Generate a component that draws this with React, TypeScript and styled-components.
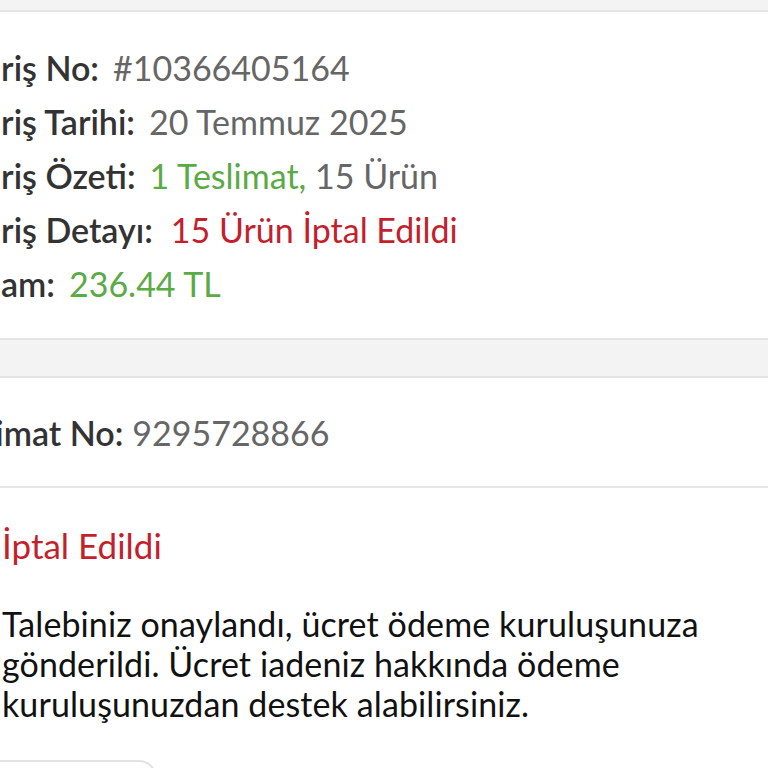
import styled, { createGlobalStyle } from "styled-components";

const GlobalStyle = createGlobalStyle`
  html, body {
    margin: 0;
    padding: 0;
    background: #ffffff;
    overflow: hidden;
  }
  body {
    font-family: Lato, "Noto Sans", sans-serif;
    -webkit-font-smoothing: antialiased;
  }
`;

const Page = styled.div`
  width: 768px;
  height: 768px;
  overflow: hidden;
  display: flex;
  flex-direction: column;
`;

const Band = styled.div<{ $height: number }>`
  height: ${(p) => p.$height}px;
  flex-shrink: 0;
  background: #f3f3f3;
  border-top: 2px solid #e4e4e4;
  border-bottom: 2px solid #e4e4e4;
  &:first-child {
    border-top: 0;
  }
`;

const Section = styled.section<{ $pad: string; $indent: number; $divider?: boolean }>`
  flex-shrink: 0;
  padding: ${(p) => p.$pad};
  margin-left: ${(p) => p.$indent}px;
  border-bottom: ${(p) => (p.$divider ? "2px solid #e6e6e6" : "0")};
`;

const Row = styled.div`
  display: flex;
  align-items: baseline;
  height: 54px;
  line-height: 54px;
  font-size: 34px;
  white-space: nowrap;
`;

const Label = styled.span<{ $gap?: number }>`
  font-weight: 600;
  color: #333333;
  margin-right: ${(p) => p.$gap ?? 14}px;
`;

const Value = styled.span<{ $tone?: "gray" | "green" | "red" }>`
  font-weight: 400;
  color: ${(p) =>
    p.$tone === "green" ? "#5aaa45" : p.$tone === "red" ? "#c41f2d" : "#666666"};
`;

const Status = styled.div`
  font-size: 35px;
  line-height: 40px;
  color: #c41f2d;
  white-space: nowrap;
`;

const Message = styled.p`
  margin: 39px 0 0;
  font-size: 34px;
  letter-spacing: 0.1px;
  line-height: 40px;
  color: #111111;
  width: 740px;
`;

const OutlineButton = styled.div`
  margin-top: 36px;
  margin-left: -20px;
  width: 175px;
  height: 48px;
  border: 2px solid #e2e2e2;
  border-radius: 18px;
  box-sizing: border-box;
`;

export default function App() {
  return (
    <Page>
      <GlobalStyle />
      <Band $height={10} />
      <Section $pad="29px 0 27px 0" $indent={-62}>
        <Row>
          <Label>Sipariş No:</Label>
          <Value>#10366405164</Value>
        </Row>
        <Row>
          <Label>Sipariş Tarihi:</Label>
          <Value>20 Temmuz 2025</Value>
        </Row>
        <Row>
          <Label>Sipariş Özeti:</Label>
          <Value $tone="green">1 Teslimat,&nbsp;</Value>
          <Value>15 Ürün</Value>
        </Row>
        <Row>
          <Label $gap={18}>Sipariş Detayı:</Label>
          <Value $tone="red">15 Ürün İptal Edildi</Value>
        </Row>
        <Row>
          <Label>Toplam:</Label>
          <Value $tone="green">236.44 TL</Value>
        </Row>
      </Section>
      <Band $height={36} />
      <Section $pad="28px 0 26px 0" $indent={-62} $divider>
        <Row>
          <Label $gap={9}>Teslimat No:</Label>
          <Value>9295728866</Value>
        </Row>
      </Section>
      <Section $pad="37px 0 0 0" $indent={2}>
        <Status>İptal Edildi</Status>
        <Message>
          Talebiniz onaylandı, ücret ödeme kuruluşunuza gönderildi. Ücret iadeniz
          hakkında ödeme kuruluşunuzdan destek alabilirsiniz.
        </Message>
        <OutlineButton />
      </Section>
    </Page>
  );
}
